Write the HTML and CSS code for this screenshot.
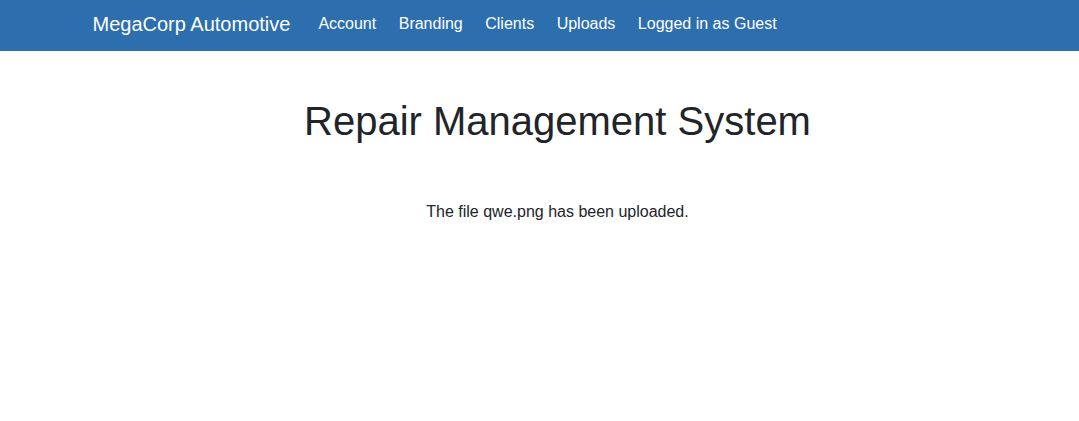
FILE: index.html
```html
<!DOCTYPE html>
<html lang="en">
<head>
<meta charset="utf-8">
<title>Repair Management System</title>
<link rel="stylesheet" href="styles.css">
</head>
<body>
<nav class="navbar">
  <div class="container nav-inner">
    <a class="brand" href="#">MegaCorp Automotive</a>
    <ul class="nav-links">
      <li><a href="#">Account</a></li>
      <li><a href="#">Branding</a></li>
      <li><a href="#">Clients</a></li>
      <li><a href="#">Uploads</a></li>
      <li><a href="#">Logged in as Guest</a></li>
    </ul>
  </div>
</nav>
<main class="container content">
  <h1 class="title">Repair Management System</h1>
  <p class="message">The file qwe.png has been uploaded.</p>
</main>
</body>
</html>
```

FILE: styles.css
```css
* { box-sizing: border-box; }
html, body { margin: 0; padding: 0; }
body {
  font-family: "Liberation Sans", Arial, sans-serif;
  font-size: 16px;
  line-height: 1.5;
  color: #212529;
  background: #fff;
}
.container {
  width: 960px;
  margin-left: 77.5px;
  padding: 0 15px;
}
.navbar {
  background: #2c6eae;
  height: 51px;
}
.nav-inner {
  display: flex;
  align-items: center;
  height: 51px;
  padding-bottom: 4px;
}
.brand {
  color: #fff;
  text-decoration: none;
  font-size: 20px;
  line-height: 30px;
  margin-right: 28px;
}
.nav-links {
  display: flex;
  gap: 22.5px;
  list-style: none;
  margin: 0;
  padding: 0;
}
.nav-links a {
  color: #fff;
  text-decoration: none;
  font-size: 16px;
  line-height: 24px;
}
.content {
  text-align: center;
}
.title {
  font-size: 40px;
  font-weight: 400;
  line-height: 1.2;
  margin: 46px 0 0;
}
.message {
  margin: 55px 0 0;
}
```
